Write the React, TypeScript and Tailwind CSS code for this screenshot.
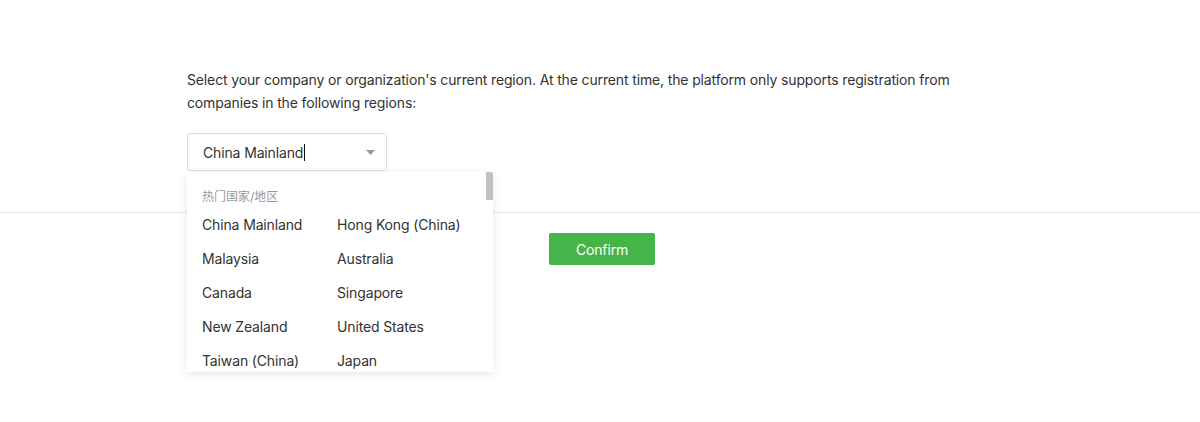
const hot: [string, string][] = [
  ['China Mainland', 'Hong Kong (China)'],
  ['Malaysia', 'Australia'],
  ['Canada', 'Singapore'],
  ['New Zealand', 'United States'],
  ['Taiwan (China)', 'Japan'],
];

export default function App() {
  return (
    <div className="min-h-[422px] bg-white font-['Inter','Noto_Sans_CJK_SC',sans-serif] text-[#333]">
      <div className="border-b border-[#e6e6e6] pt-[68px] pb-[41px]">
        <div className="mx-auto w-[826px]">
          <p className="text-[14px] leading-[23px] tracking-[-0.14px] text-[#333]">
            Select your company or organization's current region. At the current time, the platform only supports registration from
            <br />
            companies in the following regions:
          </p>
          <div className="relative mt-[19px] w-[200px]">
            <div className="flex h-[38px] items-center justify-between rounded-[3px] border border-[#dcdcdc] pl-[15px] pr-[11px]">
              <span className="flex items-center text-[14px] tracking-[-0.14px] text-[#333]">
                China Mainland
                <span className="ml-px inline-block h-[17px] w-px bg-[#111]" />
              </span>
              <svg width="9" height="5" viewBox="0 0 9 5">
                <path d="M0 0h9L4.5 5z" fill="#999" />
              </svg>
            </div>
            <div className="absolute left-0 top-[39px] z-10 h-[200px] w-[306px] overflow-hidden rounded-[2px] bg-white shadow-[0_2px_10px_rgba(0,0,0,0.1)]">
              <div className="absolute right-0 top-0 h-[28px] w-[7px] bg-[#c1c1c1]" />
              <div className="pt-[14px] pl-[15px]">
                <div className="flex h-[21px] items-center text-[12px] text-[#999]">热门国家/地区</div>
                {hot.map(([a, b]) => (
                  <div key={a} className="flex h-[34px] items-center text-[14px] tracking-[-0.14px] text-[#333]">
                    <span className="w-[135px]">{a}</span>
                    <span>{b}</span>
                  </div>
                ))}
              </div>
            </div>
          </div>
        </div>
      </div>
      <div className="flex justify-center pt-[20px] pl-[4px]">
        <button className="h-[32px] w-[106px] rounded-[2px] bg-[#45b549] text-[14px] tracking-[-0.14px] text-white">Confirm</button>
      </div>
    </div>
  );
}
